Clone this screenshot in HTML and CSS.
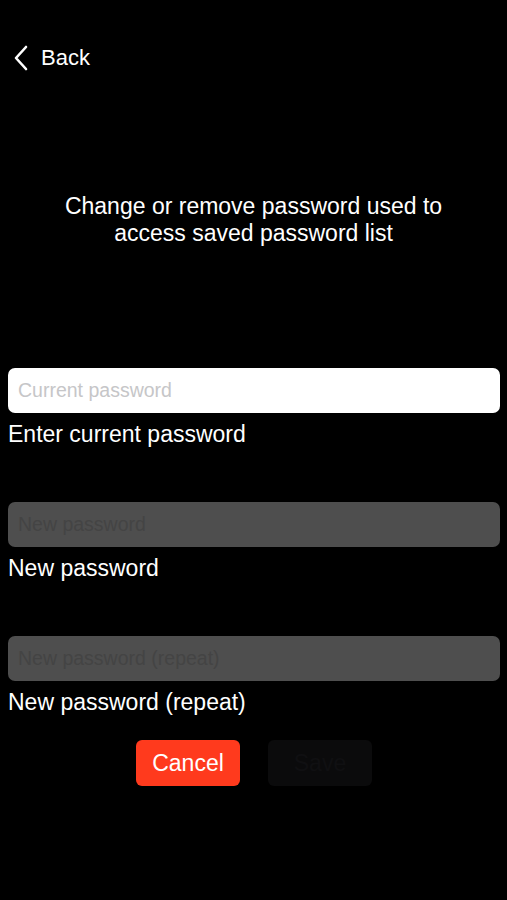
FILE: index.html
```html
<!DOCTYPE html>
<html lang="en">
<head>
    <meta charset="UTF-8">
    <meta name="viewport" content="width=device-width, initial-scale=1.0">
    <title>Change password</title>
    <link rel="stylesheet" href="styles.css">
</head>
<body>
    <!-- Navigation -->
    <div class="nav">
        <a class="back" href="#">
            <svg class="chevron" width="16" height="26" viewBox="0 0 16 26">
                <path d="M13 2 L3 13 L13 24" fill="none" stroke="#fff" stroke-width="2.6" stroke-linecap="round" stroke-linejoin="round"/>
            </svg>
            <span>Back</span>
        </a>
    </div>

    <p class="intro">Change or remove password used to<br>access saved password list</p>

    <form class="form">
        <div class="field">
            <input type="password" class="input" placeholder="Current password">
            <label class="label">Enter current password</label>
        </div>
        <div class="field">
            <input type="password" class="input disabled" placeholder="New password" disabled>
            <label class="label">New password</label>
        </div>
        <div class="field">
            <input type="password" class="input disabled" placeholder="New password (repeat)" disabled>
            <label class="label">New password (repeat)</label>
        </div>

        <div class="actions">
            <button type="button" class="btn cancel">Cancel</button>
            <button type="submit" class="btn save" disabled>Save</button>
        </div>
    </form>
</body>
</html>
```

FILE: styles.css
```css
body {
    margin: 0;
    background-color: #000;
    color: #fff;
    font-family: "Liberation Sans", Arial, sans-serif;
}

.nav {
    padding: 45px 0 0 13px;
    height: 30px;
}

.back {
    display: flex;
    align-items: center;
    gap: 12px;
    color: #fff;
    text-decoration: none;
    font-size: 22px;
}

.intro {
    margin: 118px 0 0;
    text-align: center;
    font-size: 23px;
    line-height: 27px;
}

.form {
    margin-top: 121px;
    padding: 0 7px 0 8px;
}

.field {
    height: 134px;
}

.input {
    display: block;
    box-sizing: border-box;
    width: 100%;
    height: 45px;
    padding: 0 10px;
    border: none;
    border-radius: 7px;
    background-color: #fff;
    font-family: inherit;
    font-size: 19.5px;
    outline: none;
}

.input::placeholder {
    color: #c6c6c8;
}

.input.disabled {
    background-color: #4e4e4e;
}

.input.disabled::placeholder {
    color: #444;
}

.label {
    display: block;
    margin-top: 8px;
    font-size: 23px;
    line-height: 26px;
}

.actions {
    display: flex;
    justify-content: center;
    gap: 28px;
    margin-top: -30px;
}

.btn {
    width: 104px;
    height: 46px;
    border: none;
    border-radius: 6px;
    font-family: inherit;
    font-size: 23px;
}

.cancel {
    background-color: #ff3a1d;
    color: #fff;
}

.save {
    background-color: #0b0b0c;
    color: #101012;
}
```
